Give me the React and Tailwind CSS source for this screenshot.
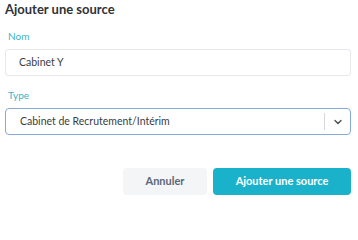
import React from "react";

export default function App() {
  return (
    <div className="w-[358px] h-[201px] bg-white overflow-hidden" style={{ fontFamily: "Lato, 'Open Sans', sans-serif" }}>
      <div className="pl-[5px] pr-[7px]">
        <h1 className="text-[13px] leading-[18px] font-bold text-[#2f3237]">Ajouter une source</h1>
        <label className="block mt-[11px] pl-[3px] text-[10px] leading-[14px] text-[#37b3c8]">Nom</label>
        <div className="mt-[6px] h-[27px] border border-[#e6e8eb] rounded-[3px] flex items-center pl-[13px] text-[10.5px] text-[#3a3d42]">
          Cabinet Y
        </div>
        <label className="block mt-[12px] pl-[3px] text-[10px] leading-[14px] text-[#37b3c8]">Type</label>
        <div className="mt-[6px] h-[27px] border border-[#86a9d8] rounded-[4px] flex items-center text-[10.5px] text-[#3a3d42]">
          <span className="flex-1 pl-[14px]">Cabinet de Recrutement/Intérim</span>
          <span className="w-px h-[17px] bg-[#d4d7db]"></span>
          <span className="w-[25px] flex justify-center">
            <svg width="10" height="10" viewBox="0 0 10 10" fill="none">
              <path d="M2 3.5 L5 6.5 L8 3.5" stroke="#4a4f55" strokeWidth="1.4" strokeLinecap="round" strokeLinejoin="round" />
            </svg>
          </span>
        </div>
        <div className="mt-[33px] flex justify-end gap-[6px]">
          <button className="w-[84px] h-[27px] rounded-[4px] bg-[#f3f5f7] text-[11px] font-bold text-[#5b6777]">Annuler</button>
          <button className="w-[138px] h-[27px] rounded-[4px] bg-[#19b2ca] text-[11px] font-bold text-white">Ajouter une source</button>
        </div>
      </div>
    </div>
  );
}
